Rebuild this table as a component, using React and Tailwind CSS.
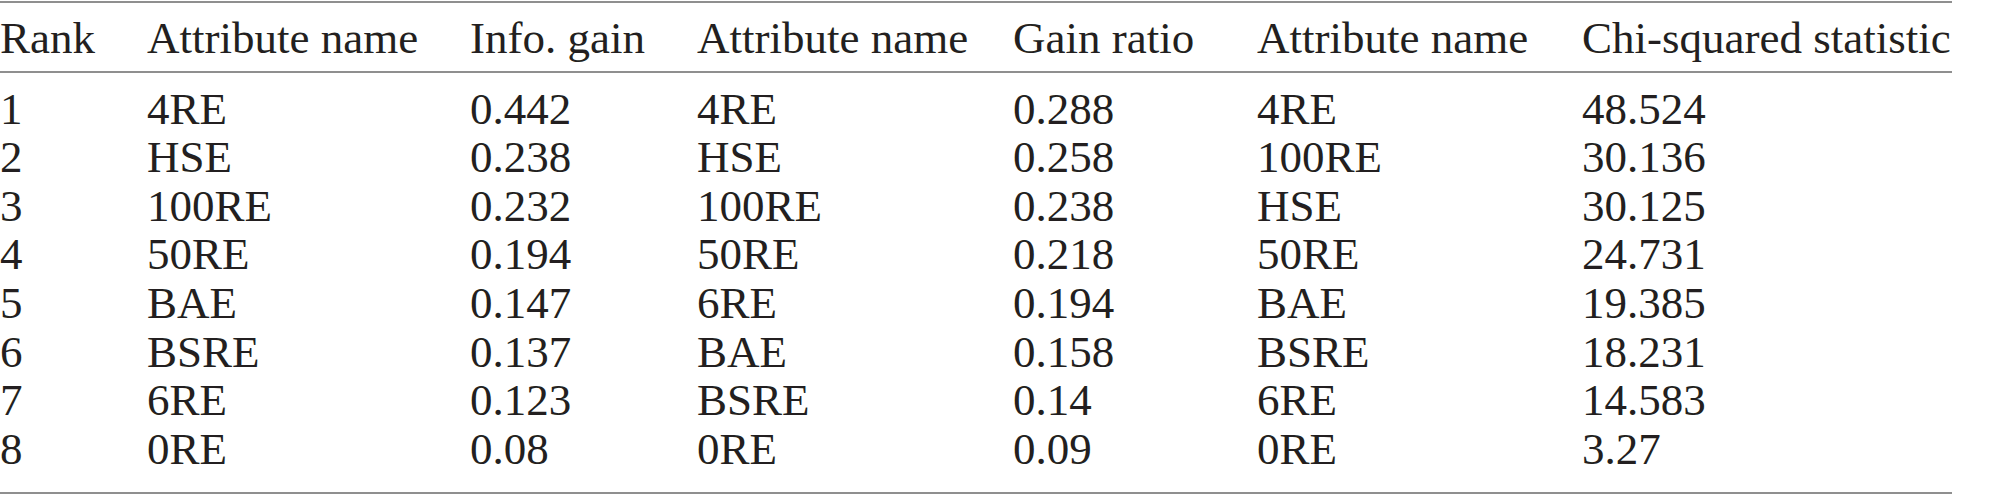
const headers = [
  "Rank",
  "Attribute name",
  "Info. gain",
  "Attribute name",
  "Gain ratio",
  "Attribute name",
  "Chi-squared statistic",
];

const rows = [
  ["1", "4RE", "0.442", "4RE", "0.288", "4RE", "48.524"],
  ["2", "HSE", "0.238", "HSE", "0.258", "100RE", "30.136"],
  ["3", "100RE", "0.232", "100RE", "0.238", "HSE", "30.125"],
  ["4", "50RE", "0.194", "50RE", "0.218", "50RE", "24.731"],
  ["5", "BAE", "0.147", "6RE", "0.194", "BAE", "19.385"],
  ["6", "BSRE", "0.137", "BAE", "0.158", "BSRE", "18.231"],
  ["7", "6RE", "0.123", "BSRE", "0.14", "6RE", "14.583"],
  ["8", "0RE", "0.08", "0RE", "0.09", "0RE", "3.27"],
];

const cols =
  "grid grid-cols-[147px_323px_227px_316px_244px_325px_370px]";

export default function App() {
  return (
    <div className="min-h-screen bg-white">
      <div className="w-[1952px] pt-px [font-family:Liberation_Serif,Times_New_Roman,serif] text-[45px] leading-[48.6px] text-[#231f20]">
        <div className={`${cols} border-y-2 border-[#8f8f8f] pt-[11px] pb-[8px]`}>
          {headers.map((h, i) => (
            <div key={i} className="whitespace-nowrap">
              {h}
            </div>
          ))}
        </div>
        <div className="border-b-2 border-[#8f8f8f] pt-[12px] pb-[19px]">
          {rows.map((r, ri) => (
            <div key={ri} className={cols}>
              {r.map((c, ci) => (
                <div key={ci} className="whitespace-nowrap">
                  {c}
                </div>
              ))}
            </div>
          ))}
        </div>
      </div>
    </div>
  );
}
